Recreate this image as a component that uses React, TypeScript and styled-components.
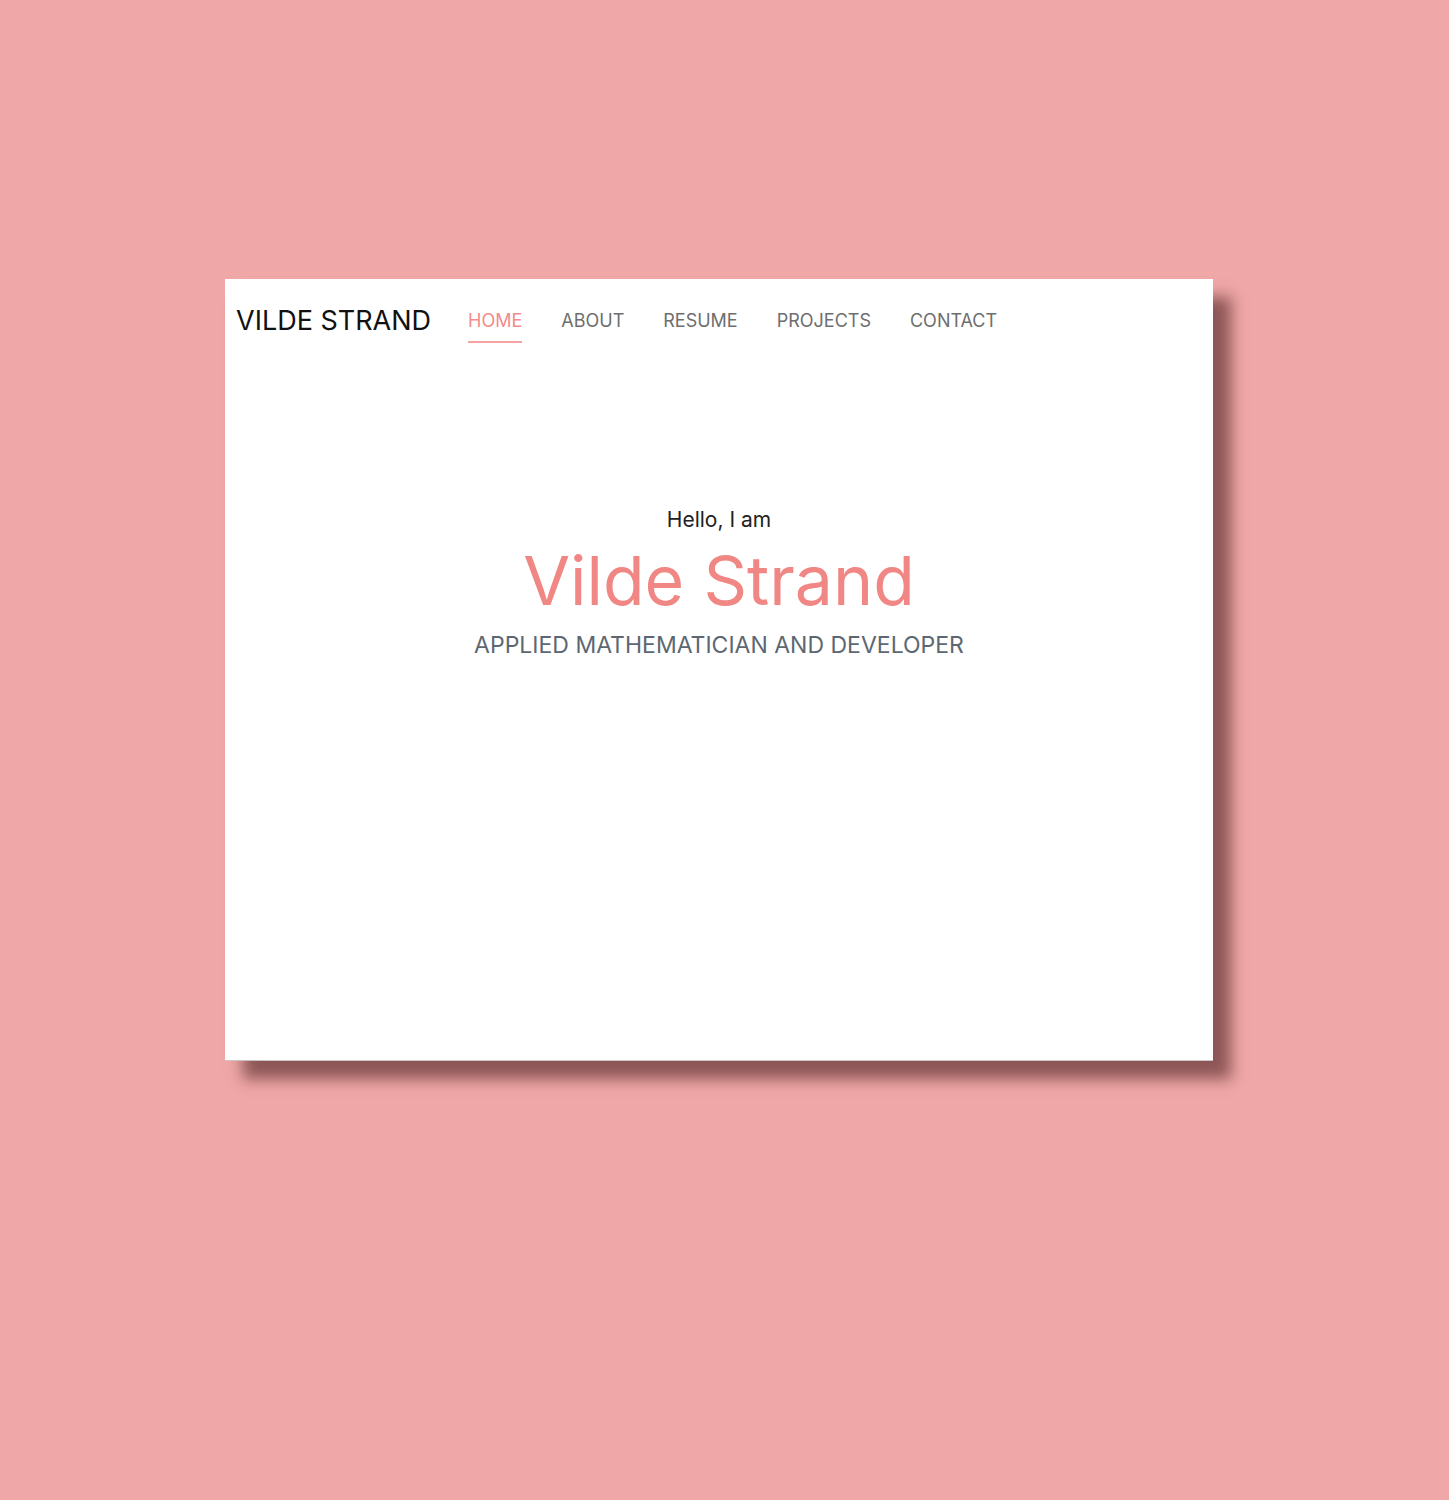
import React from "react";
import styled, { createGlobalStyle } from "styled-components";

const Global = createGlobalStyle`
  html, body { margin: 0; padding: 0; background: #f0a7a7; }
  body { font-family: Inter, "Noto Sans", sans-serif; }
`;

const Page = styled.div`
  min-height: 1500px;
  padding: 279px 0 0 225px;
  box-sizing: border-box;
`;

const Card = styled.div`
  width: 988px;
  height: 782px;
  background: #fff;
  box-shadow: 18px 18px 14px rgba(60, 20, 20, 0.55);
  border-bottom: 1px solid #c9c4c4;
  display: flex;
  flex-direction: column;
  box-sizing: border-box;
`;

const Header = styled.header`
  display: flex;
  align-items: flex-start;
  padding: 26px 0 0 11px;
`;

const Brand = styled.div`
  font-size: 27px;
  color: #111;
  font-weight: 400;
  line-height: 32px;
  margin-right: 37px;
`;

const Nav = styled.nav`
  display: flex;
  gap: 39px;
  padding-top: 4px;
`;

const NavItem = styled.a<{ $active?: boolean }>`
  font-size: 18px;
  line-height: 24px;
  color: ${(p) => (p.$active ? "#f28c8a" : "#6e6e6e")};
  text-decoration: none;
  padding-bottom: 8px;
  border-bottom: 2px solid ${(p) => (p.$active ? "#f5a3a1" : "transparent")};
`;

const Hero = styled.section`
  display: flex;
  flex-direction: column;
  align-items: center;
  padding-top: 163px;
`;

const Hello = styled.div`
  font-size: 21px;
  line-height: 28px;
  color: #222;
`;

const Name = styled.h1`
  margin: 4px 0 0;
  font-size: 68px;
  line-height: 84px;
  font-weight: 400;
  color: #f08784;
`;

const Subtitle = styled.div`
  margin-top: 8px;
  font-size: 23px;
  line-height: 30px;
  color: #5d6772;
`;

export default function App() {
  return (
    <>
      <Global />
      <Page>
        <Card>
          <Header>
            <Brand>VILDE STRAND</Brand>
            <Nav>
              <NavItem $active>HOME</NavItem>
              <NavItem>ABOUT</NavItem>
              <NavItem>RESUME</NavItem>
              <NavItem>PROJECTS</NavItem>
              <NavItem>CONTACT</NavItem>
            </Nav>
          </Header>
          <Hero>
            <Hello>Hello, I am</Hello>
            <Name>Vilde Strand</Name>
            <Subtitle>APPLIED MATHEMATICIAN AND DEVELOPER</Subtitle>
          </Hero>
        </Card>
      </Page>
    </>
  );
}
